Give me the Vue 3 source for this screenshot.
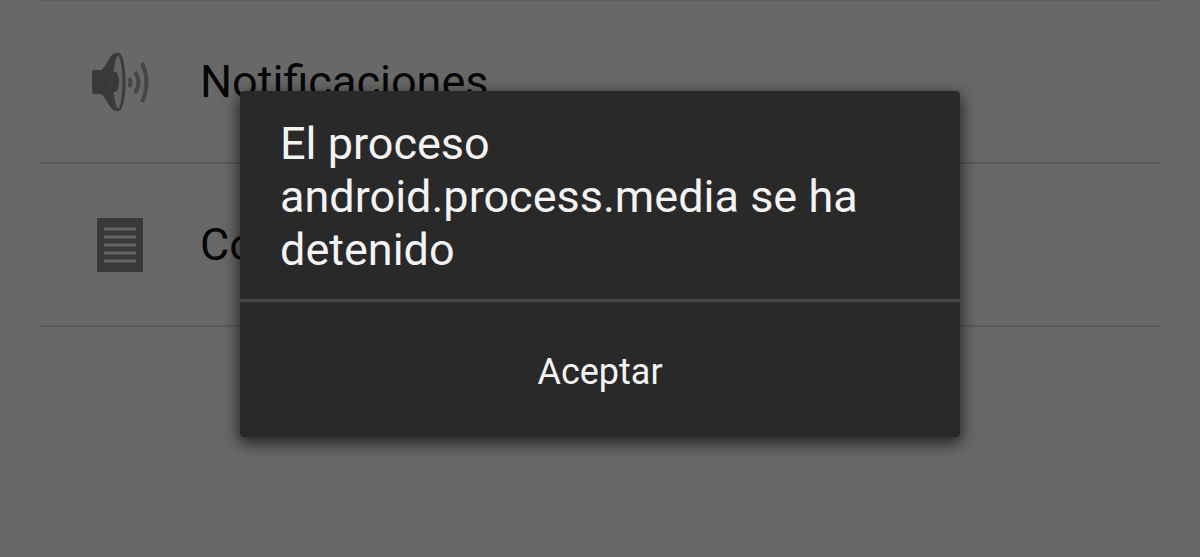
<script setup>
const message = 'El proceso android.process.media se ha detenido'
const items = [
  { icon: 'sound', label: 'Notificaciones' },
  { icon: 'document', label: 'Co' },
]
</script>

<template>
  <main class="screen">
    <ul class="settings">
      <li v-for="item in items" :key="item.icon" class="row">
        <svg v-if="item.icon === 'sound'" class="icon" viewBox="0 0 60 60" aria-hidden="true">
          <path d="M4 18H11C17 15 19 1 27 1V59C19 59 17 45 11 42H4Q2 42 2 40V20Q2 18 4 18Z" fill="#393939" />
          <ellipse cx="28" cy="30" rx="6" ry="28" fill="#646464" stroke="#3d3d3d" stroke-width="3" />
          <path d="M22 20H26Q29 23 29 30Q29 37 26 40H22Z" fill="#393939" />
          <path d="M39 26Q42 30 39 35" fill="none" stroke="#464646" stroke-width="4" />
          <path d="M45 20Q52 30 45 41" fill="none" stroke="#464646" stroke-width="4" />
          <path d="M52 11Q61 30 52 50" fill="none" stroke="#464646" stroke-width="4" />
        </svg>
        <svg v-else class="icon" viewBox="0 0 60 60" aria-hidden="true">
          <rect x="7" y="3" width="46" height="54" fill="#393939" />
          <path d="M14 14H46M14 22H46M14 30H46M14 38H46M14 46H46" fill="none" stroke="#646464" stroke-width="3" />
        </svg>
        <span>{{ item.label }}</span>
      </li>
    </ul>
    <div class="overlay">
      <section class="dialog" role="alertdialog" aria-modal="true" aria-labelledby="message">
        <p id="message" class="message">{{ message }}</p>
        <button type="button" class="accept">Aceptar</button>
      </section>
    </div>
  </main>
</template>

<style>
body {
  margin: 0;
  background: #686868;
}
</style>

<style scoped>
.screen {
  position: relative;
  box-sizing: border-box;
  min-height: 100vh;
  background: #686868;
  font-family: Roboto, "Liberation Sans", sans-serif;
  overflow: hidden;
}

.settings {
  margin: 0 40px;
  padding: 0;
  list-style: none;
  border-top: 1px solid #5d5d5d;
}

.row {
  display: flex;
  align-items: center;
  gap: 50px;
  padding: 50px;
  border-bottom: 2px solid #5a5a5a;
  color: #060606;
  font-size: 45px;
  line-height: 61px;
}

.icon {
  flex: none;
  width: 60px;
  height: 60px;
}

.overlay {
  position: absolute;
  inset: 0;
  display: flex;
  align-items: flex-start;
  justify-content: center;
  padding-top: 91px;
}

.dialog {
  width: 60%;
  border-radius: 4px;
  background: #292929;
  box-shadow: 0 5px 16px 1px rgba(0, 0, 0, 0.7);
  color: #f3f3f3;
}

.message {
  margin: 0;
  padding: 26px 40px 23px;
  border-bottom: 3px solid #484848;
  font-size: 45px;
  line-height: 53px;
}

.accept {
  display: block;
  width: 100%;
  margin: 0;
  padding: 49px 20px 43px;
  border: 0;
  border-radius: 0 0 4px 4px;
  background: transparent;
  color: inherit;
  font-family: inherit;
  font-size: 36px;
  line-height: 43px;
}
</style>
